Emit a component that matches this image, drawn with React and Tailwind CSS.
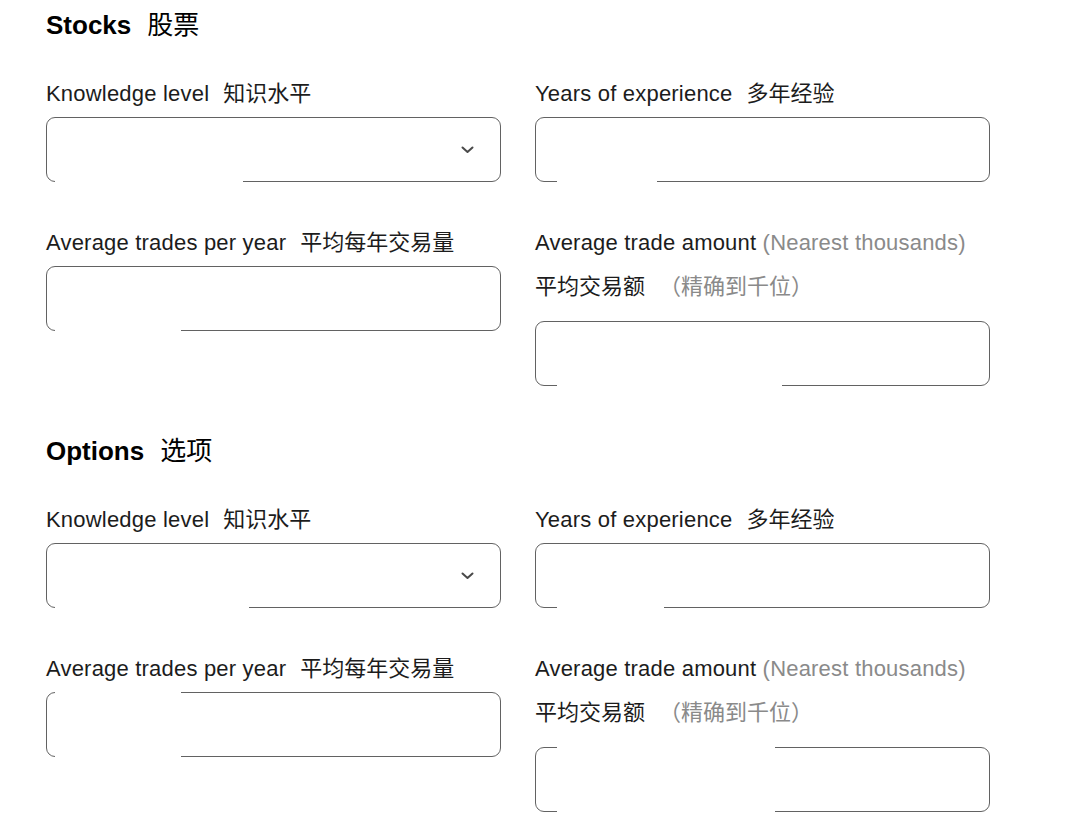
import React from "react";

const FONT = { fontFamily: '"Liberation Sans", "Noto Sans CJK SC", sans-serif' };

function Chevron() {
  return (
    <svg width="13" height="8" viewBox="0 0 13 8" fill="none" className="text-[#4a4a4a]">
      <path d="M1.5 1.5 L6.5 6 L11.5 1.5" stroke="currentColor" strokeWidth="2" strokeLinecap="round" strokeLinejoin="round" />
    </svg>
  );
}

// Masked stretch of the outline (white strip lying over the border)
function Mask({ left, width, edge }) {
  const pos = edge === "top" ? { top: -3 } : { bottom: -3 };
  return <span className="absolute h-[8px] bg-white" style={{ left, width, ...pos }} />;
}

function Field({ select, masks = [] }) {
  return (
    <div className="relative h-[65px] w-full rounded-[9px] border-[1.5px] border-[#626262] bg-white flex items-center justify-end pr-[26px]">
      {select && <Chevron />}
      {masks.map((m, i) => (
        <Mask key={i} {...m} />
      ))}
    </div>
  );
}

function Label({ en, zh, note }) {
  return (
    <div className="text-[22px] leading-[26px] text-[#1c1c1c] whitespace-nowrap">
      <span className="tracking-[0.2px]">{en}</span>
      {note ? (
        <span className="tracking-[0.2px] text-[#8a8a8a]"> {note}</span>
      ) : (
        <span className="ml-[14px]">{zh}</span>
      )}
    </div>
  );
}

function Section({ title, zh, masks }) {
  return (
    <section className="mb-[50px]">
      <h2 className="text-[26px] leading-[30px] text-black mb-[41px] whitespace-nowrap">
        <span className="font-bold">{title}</span>
        <span className="ml-[16px] font-normal">{zh}</span>
      </h2>
      <div className="grid grid-cols-[455px_455px] gap-x-[34px] gap-y-[48px] items-start">
        <div>
          <Label en="Knowledge level" zh="知识水平" />
          <div className="mt-[10px]">
            <Field select masks={masks[0]} />
          </div>
        </div>
        <div>
          <Label en="Years of experience" zh="多年经验" />
          <div className="mt-[10px]">
            <Field masks={masks[1]} />
          </div>
        </div>
        <div>
          <Label en="Average trades per year" zh="平均每年交易量" />
          <div className="mt-[10px]">
            <Field masks={masks[2]} />
          </div>
        </div>
        <div>
          <Label en="Average trade amount" note="(Nearest thousands)" />
          <div className="mt-[18px] text-[22px] leading-[26px] text-[#1c1c1c] whitespace-nowrap">
            <span>平均交易额</span>
            <span className="ml-[14px] text-[#8a8a8a]">（精确到千位）</span>
          </div>
          <div className="mt-[21px]">
            <Field masks={masks[3]} />
          </div>
        </div>
      </div>
    </section>
  );
}

export default function App() {
  const stocks = [
    [{ left: 8, width: 188, edge: "bottom" }],
    [{ left: 21, width: 100, edge: "bottom" }],
    [{ left: 8, width: 126, edge: "bottom" }],
    [{ left: 21, width: 225, edge: "bottom" }],
  ];
  const options = [
    [{ left: 8, width: 194, edge: "bottom" }],
    [{ left: 21, width: 107, edge: "bottom" }],
    [
      { left: 8, width: 126, edge: "top" },
      { left: 8, width: 126, edge: "bottom" },
    ],
    [
      { left: 21, width: 218, edge: "top" },
      { left: 21, width: 218, edge: "bottom" },
    ],
  ];
  return (
    <div className="min-h-[826px] w-[1080px] bg-white pl-[46px] pt-[10px]" style={FONT}>
      <Section title="Stocks" zh="股票" masks={stocks} />
      <Section title="Options" zh="选项" masks={options} />
    </div>
  );
}
